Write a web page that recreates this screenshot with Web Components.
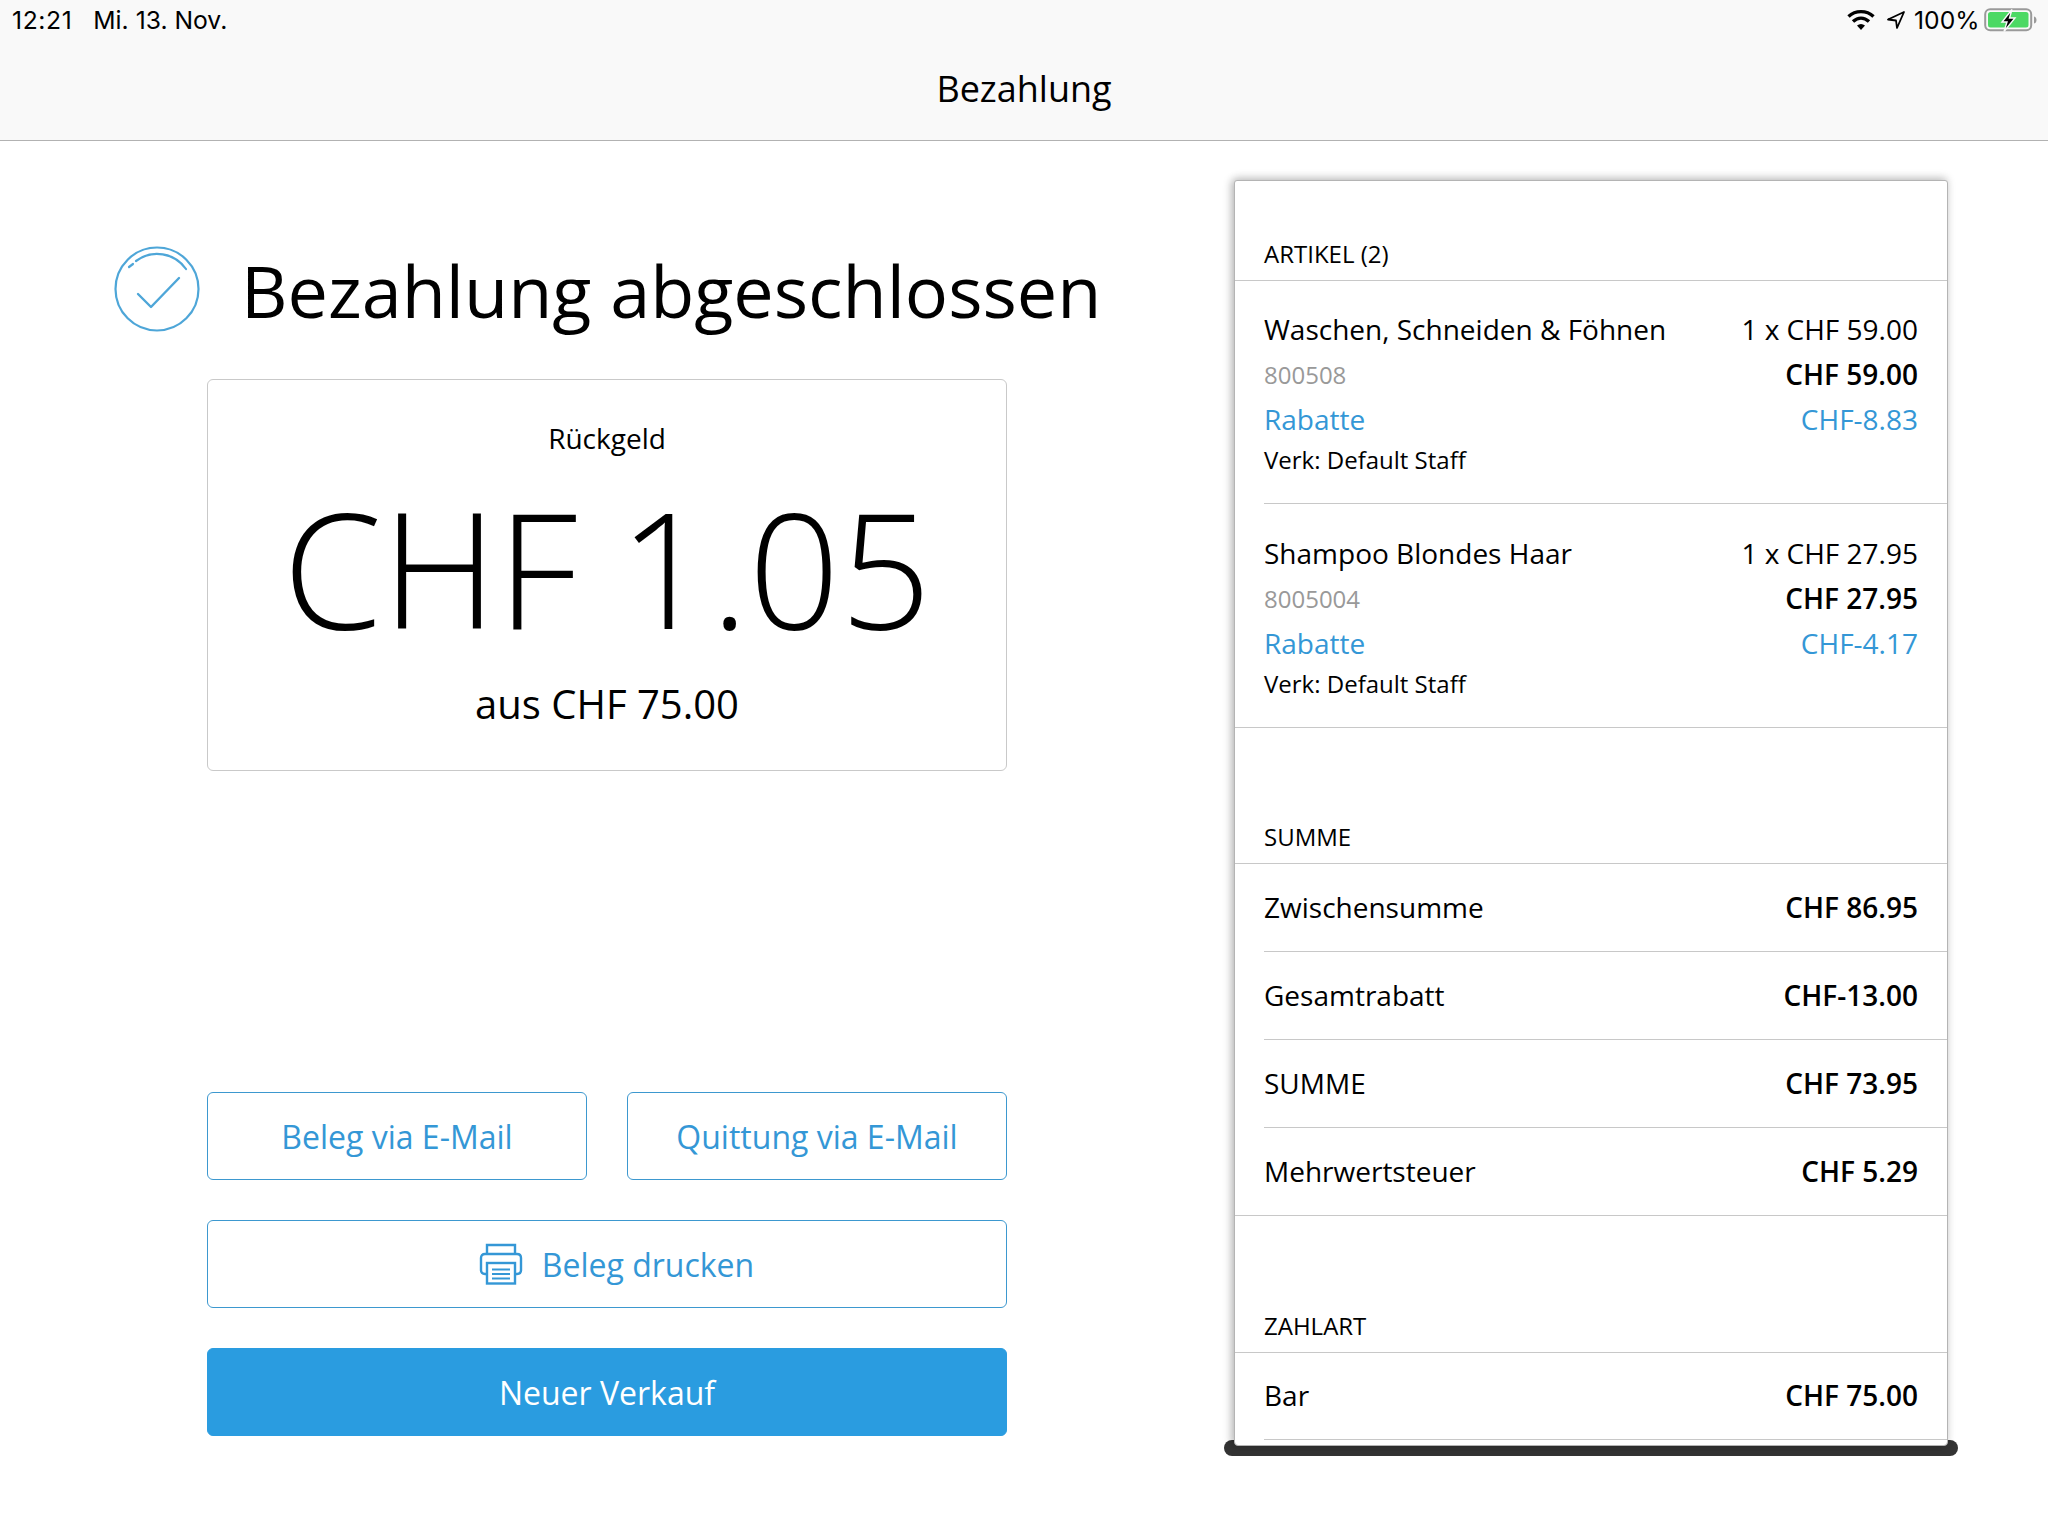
<!DOCTYPE html>
<html><head><meta charset="utf-8"><style>
html,body{margin:0;padding:0;background:#fff;font-family:"Open Sans",sans-serif;color:#000}
body{width:2048px;height:1536px;overflow:hidden}
</style></head><body>
<template id="t-bar"><style>
:host{display:block;height:140px;background:#f9f9f9;border-bottom:1px solid #b2b2b2;box-sizing:content-box;position:relative}
.status{display:flex;justify-content:space-between;align-items:center;height:39px;padding:0 8px 0 12px;font:24.700px "Inter","Liberation Sans",sans-serif;letter-spacing:0}
.l{display:flex;gap:21px}.l span:first-child{letter-spacing:.6px}.r{display:flex;align-items:center;gap:8px}
.r span{margin-right:-3.500px}.r svg:first-child{margin-right:3px}
h1{margin:0;font:400 36px/1 "Open Sans",sans-serif;text-align:center;padding-top:32px}
svg{display:block;flex:none}
</style><div class="status"><div class="l"><span>12:21</span><span>Mi. 13. Nov.</span></div>
<div class="r">
<svg width="28" height="22" viewBox="0 0 28 22"><path d="M1.500 7.500C8.500 1 19.500 1 26.500 7.500" fill="none" stroke="#000" stroke-width="3.400"/><path d="M6 12.500C11 8 17 8 22 12.500" fill="none" stroke="#000" stroke-width="3.400"/><path d="M10 16.500L14 21L18 16.500C15.500 14.500 12.500 14.500 10 16.500Z" fill="#000"/></svg>
<svg width="20" height="20" viewBox="0 0 20 20"><path d="M18 2L2 9.500L10 10.500L11 18Z" fill="none" stroke="#000" stroke-width="1.800" stroke-linejoin="round"/></svg>
<span>100%</span>
<svg width="56" height="26" viewBox="0 0 56 26"><rect x="1.200" y="2.200" width="46" height="21" rx="5" fill="none" stroke="#9a9a9a" stroke-width="2"/><rect x="4" y="5" width="40.500" height="15.500" rx="2.500" fill="#4cd964"/><path d="M28 2.500L18 15H23L20 24.500L31 11H25.500Z" fill="#000" stroke="#f9f9f9" stroke-width="1.400"/><path d="M50 9.500C52 10 52.500 11.500 52.500 13S52 16 50 16.500Z" fill="#9a9a9a"/></svg>
</div></div><h1><slot></slot></h1></template>

<template id="t-btn"><style>
:host{display:flex;flex:1;height:88px;box-sizing:border-box;border:1px solid #3d98cf;border-radius:6px;align-items:center;justify-content:center;gap:19px;color:#3497d6;font:400 32px "Open Sans",sans-serif;background:#fff}
:host([primary]){background:#2a9ce0;color:#fff;border-color:#2a9ce0}
:host([icon]){padding-left:19px}
::slotted(svg){display:block;flex:none}
</style><slot></slot></template>

<template id="t-head"><style>
:host{display:block;padding:0 0 13px 29px;height:26px;font:400 24px/26px "Open Sans",sans-serif;border-bottom:1px solid #c8c8c8}
</style><slot></slot></template>

<template id="t-row"><style>
:host{display:flex;justify-content:space-between;align-items:center;box-sizing:border-box;padding:0 29px 2px;height:87px;margin-bottom:1px;font:400 28px "Open Sans",sans-serif;position:relative}
:host([last]){height:86px;padding-bottom:3px}
:host::after{content:"";position:absolute;left:29px;right:0;bottom:-1px;height:1px;background:#c8c8c8}
:host([full])::after{left:0}
b{font-weight:600;font-size:28px}
</style><span><slot name="l"></slot></span><b><slot name="r"></slot></b></template>

<template id="t-item"><style>
:host{display:grid;grid-template-columns:1fr auto;grid-auto-rows:45px;padding:26px 29px 10px;position:relative;font:400 28px/45px "Open Sans",sans-serif;height:222px;box-sizing:border-box;margin-bottom:1px}
:host([full]){height:223px;padding-top:27px}
:host::after{content:"";position:absolute;left:29px;right:0;bottom:-1px;height:1px;background:#c8c8c8}
:host([full])::after{left:0}
.r{text-align:right}
.sku{color:#999;font-size:24px}.pr{font-weight:600;font-size:28px}.blue{color:#3497d6}
.st{font-size:24px;line-height:36px;grid-column:1/3}
</style><div><slot name="name"></slot></div><div class="r"><slot name="qty"></slot></div>
<div class="sku"><slot name="sku"></slot></div><div class="r pr"><slot name="price"></slot></div>
<div class="blue">Rabatte</div><div class="r blue"><slot name="disc"></slot></div>
<div class="st">Verk: Default Staff</div></template>

<template id="t-receipt"><style>
:host{display:block;position:relative;width:714px;height:1266px;flex:none}
.paper{position:relative;box-sizing:border-box;height:100%;background:#fff;border:1px solid #b4b4b4;border-radius:3px 3px 4px 4px;box-shadow:-3px 0 8px rgba(0,0,0,.22),0 -3px 8px rgba(0,0,0,.12)}
.edge{position:absolute;left:-10px;right:-10px;bottom:-10px;height:16px;background:#333;border-radius:8px}
</style><div class="edge"></div><div class="paper"><slot></slot></div></template>

<template id="t-change"><style>
:host{display:block;box-sizing:border-box;height:392px;border:1px solid #c9c9c9;border-radius:6px;text-align:center;padding-top:39px}
.a{font:400 28px/38px "Open Sans",sans-serif}
.b{font:300 160px/190px "Open Sans",sans-serif;margin-top:15px;white-space:nowrap}
.c{font:400 40px/54px "Open Sans",sans-serif;margin-top:15px}
</style><div class="a"><slot name="label"></slot></div><div class="b"><slot name="amount"></slot></div><div class="c"><slot name="from"></slot></div></template>

<template id="t-title"><style>
:host{display:flex;align-items:center;gap:41px;height:112px;margin-left:-93px;white-space:nowrap}
h2{margin:0;font:400 72px/1 "Open Sans",sans-serif;position:relative;top:4px}
svg{display:block;flex:none;margin-top:6px}
</style><svg width="86" height="86" viewBox="0 0 86 86" fill="none" stroke="#4ea6d8" stroke-width="2.200" stroke-linecap="round" stroke-linejoin="round"><circle cx="43" cy="43" r="41.500"/><path d="M22 15A35 35 0 0 1 72 23"/><path d="M15 21L19 18"/><path d="M24 48L37 61L65 32" stroke-width="2.400"/></svg><h2><slot></slot></h2></template>

<template id="t-pay"><style>
:host{display:flex;padding:39px 0 0 207px;gap:228px;align-items:flex-start}
.left{width:800px;flex:none;display:flex;flex-direction:column}
</style><div class="left"><slot name="left"></slot></div><slot name="right"></slot></template>

<app-bar>Bezahlung</app-bar>
<pay-page>
<div slot="left" style="display:flex;flex-direction:column;padding-top:50px">
 <pay-title style="margin-bottom:37px">Bezahlung abgeschlossen</pay-title>
 <change-card><span slot="label">Rückgeld</span><span slot="amount">CHF 1.05</span><span slot="from">aus CHF 75.00</span></change-card>
 <div style="display:flex;gap:40px;margin-top:321px"><pay-btn>Beleg via E-Mail</pay-btn><pay-btn>Quittung via E-Mail</pay-btn></div>
 <div style="display:flex;margin-top:40px"><pay-btn icon><svg width="44" height="42" viewBox="0 0 44 42" fill="none" stroke="#3497d6" stroke-width="2.400"><path d="M8 11V2H36V11"/><path d="M8 31H6Q2 31 2 27V15Q2 11 6 11H38Q42 11 42 15V27Q42 31 38 31H36"/><rect x="8" y="20" width="28" height="20.500" fill="#fff"/><path d="M13 26.500H31M13 31H31M13 35.500H31" stroke-width="2"/></svg><span>Beleg drucken</span></pay-btn></div>
 <div style="display:flex;margin-top:40px"><pay-btn primary>Neuer Verkauf</pay-btn></div>
</div>
<pay-receipt slot="right" style="margin-left:-1px">
 <div style="height:60px"></div>
 <sec-head>ARTIKEL (2)</sec-head>
 <sale-item><span slot="name">Waschen, Schneiden &amp; Föhnen</span><span slot="qty">1 x CHF 59.00</span><span slot="sku">800508</span><span slot="price">CHF 59.00</span><span slot="disc">CHF-8.83</span></sale-item>
 <sale-item full><span slot="name">Shampoo Blondes Haar</span><span slot="qty">1 x CHF 27.95</span><span slot="sku">8005004</span><span slot="price">CHF 27.95</span><span slot="disc">CHF-4.17</span></sale-item>
 <div style="height:96px"></div>
 <sec-head>SUMME</sec-head>
 <total-row><span slot="l">Zwischensumme</span><span slot="r">CHF 86.95</span></total-row>
 <total-row><span slot="l">Gesamtrabatt</span><span slot="r">CHF-13.00</span></total-row>
 <total-row><span slot="l">SUMME</span><span slot="r">CHF 73.95</span></total-row>
 <total-row full><span slot="l">Mehrwertsteuer</span><span slot="r">CHF 5.29</span></total-row>
 <div style="height:97px"></div>
 <sec-head>ZAHLART</sec-head>
 <total-row last><span slot="l">Bar</span><span slot="r">CHF 75.00</span></total-row>
</pay-receipt>
</pay-page>
<script>
const map={'app-bar':'t-bar','pay-btn':'t-btn','sec-head':'t-head','total-row':'t-row','sale-item':'t-item','pay-receipt':'t-receipt','change-card':'t-change','pay-title':'t-title','pay-page':'t-pay'};
for(const [n,id] of Object.entries(map)){
 customElements.define(n,class extends HTMLElement{constructor(){super();this.attachShadow({mode:'open'}).appendChild(document.getElementById(id).content.cloneNode(true));}});
}
</script>
</body></html>
